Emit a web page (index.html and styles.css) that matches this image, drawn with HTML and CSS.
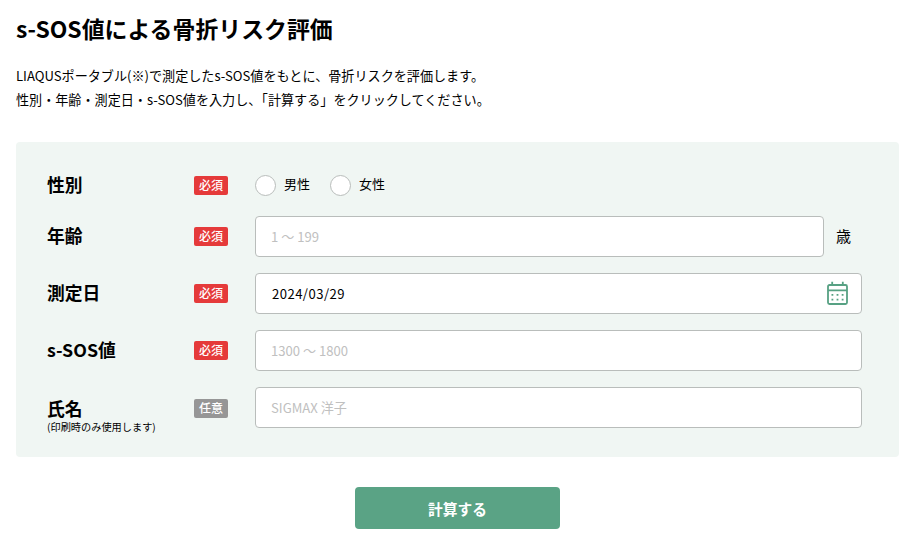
FILE: index.html
```html
<!DOCTYPE html>
<html lang="ja">
<head>
    <meta charset="UTF-8">
    <meta name="viewport" content="width=device-width, initial-scale=1.0">
    <title>s-SOS値による骨折リスク評価</title>
    <link rel="stylesheet" href="styles.css">
</head>
<body>
    <h1>s-SOS値による骨折リスク評価</h1>
    <p class="lead">LIAQUSポータブル(※)で測定したs-SOS値をもとに、骨折リスクを評価します。<br>性別・年齢・測定日・s-SOS値を入力し、「計算する」をクリックしてください。</p>

    <form>
        <div class="form-box">
            <div class="row row-radio">
                <div class="label">性別</div>
                <span class="badge">必須</span>
                <div class="field">
                    <label class="radio"><input type="radio" name="sex"><span>男性</span></label>
                    <label class="radio"><input type="radio" name="sex"><span>女性</span></label>
                </div>
            </div>
            <div class="row">
                <label class="label" for="age">年齢</label>
                <span class="badge">必須</span>
                <div class="field">
                    <input class="text" type="text" id="age" placeholder="1 ～ 199">
                    <span class="unit">歳</span>
                </div>
            </div>
            <div class="row">
                <label class="label" for="date">測定日</label>
                <span class="badge">必須</span>
                <div class="field">
                    <input class="text date" type="text" id="date" value="2024/03/29">
                    <svg class="calendar" viewBox="0 0 22 24" width="22" height="24">
                        <rect x="2" y="4" width="19" height="19" rx="1.5"/>
                        <path d="M2 9.3h19M6.2 .8v4M16.8 .8v4"/>
                        <path d="M5.5 13.8h1.8M10.6 13.8h1.8M15.7 13.8h1.8M5.5 18.7h1.8M10.6 18.7h1.8M15.7 18.7h1.8"/>
                    </svg>
                </div>
            </div>
            <div class="row">
                <label class="label" for="sos">s-SOS値</label>
                <span class="badge">必須</span>
                <div class="field">
                    <input class="text" type="text" id="sos" placeholder="1300 ～ 1800">
                </div>
            </div>
            <div class="row">
                <label class="label label-name" for="name">氏名<small>(印刷時のみ使用します)</small></label>
                <span class="badge optional">任意</span>
                <div class="field">
                    <input class="text" type="text" id="name" placeholder="SIGMAX 洋子">
                </div>
            </div>
        </div>
        <button type="button">計算する</button>
    </form>
</body>
</html>
```

FILE: styles.css
```css
* {
    box-sizing: border-box;
}
body {
    margin: 0;
    padding: 10px 21px 0 16px;
    font-family: "Noto Sans CJK JP", sans-serif;
    font-size: 13px;
    color: #000;
    background-color: #fff;
    overflow: hidden;
}
h1 {
    margin: 0;
    font-size: 22.9px;
    line-height: 36px;
    font-weight: bold;
}
.lead {
    margin: 18px 0 30px;
    font-size: 13.1px;
    line-height: 24px;
    white-space: nowrap;
}
.form-box {
    display: flex;
    flex-direction: column;
    gap: 16px;
    height: 315px;
    padding: 32px 37px 0 31px;
    border-radius: 4px;
    background-color: #f0f6f3;
}
.row {
    display: flex;
    align-items: center;
    height: 41px;
}
.row-radio {
    height: 22px;
    margin-bottom: 4px;
}
.label {
    width: 147px;
    padding-bottom: 3px;
    font-size: 17.8px;
    line-height: 24px;
    font-weight: bold;
}
.label-name {
    padding: 14px 0 0;
}
.label small {
    display: block;
    font-size: 10.2px;
    line-height: 14px;
    font-weight: normal;
    white-space: nowrap;
}
.badge {
    width: 34px;
    height: 19px;
    margin-right: 27px;
    border-radius: 2px;
    background-color: #e53a3a;
    color: #fff;
    font-size: 12px;
    line-height: 18px;
    font-weight: 500;
    text-align: center;
}
.optional {
    margin-top: 2px;
    background-color: #969696;
}
.field {
    position: relative;
    display: flex;
    align-items: center;
    flex: 1;
}
.text {
    flex: 1;
    min-width: 0;
    height: 41px;
    padding: 0 16px 0 15px;
    border: 1px solid #b9bdbb;
    border-radius: 4px;
    background-color: #fff;
    font: inherit;
    font-size: 13.1px;
    color: #000;
}
.date {
    padding-left: 16px;
    letter-spacing: 0.45px;
}
.text::placeholder {
    color: #c0c0c0;
}
.unit {
    width: 38px;
    padding: 0 0 1px 12px;
    font-size: 15px;
    line-height: 20px;
}
.calendar {
    position: absolute;
    right: 14px;
    top: 8px;
    fill: none;
    stroke: #57a183;
    stroke-width: 1.8;
}
.radio {
    display: flex;
    align-items: center;
    margin-right: 20px;
    line-height: 20px;
}
.radio span {
    padding-bottom: 2px;
}
.radio input {
    appearance: none;
    width: 21px;
    height: 21px;
    margin: 0 8px 0 0;
    border: 1px solid #b9bdbb;
    border-radius: 50%;
    background-color: #fff;
}
button {
    display: block;
    width: 205px;
    height: 42px;
    margin: 30px auto 0;
    border: none;
    border-radius: 4px;
    background-color: #5aa385;
    color: #fff;
    font-family: inherit;
    font-size: 14.7px;
    font-weight: bold;
}
```
